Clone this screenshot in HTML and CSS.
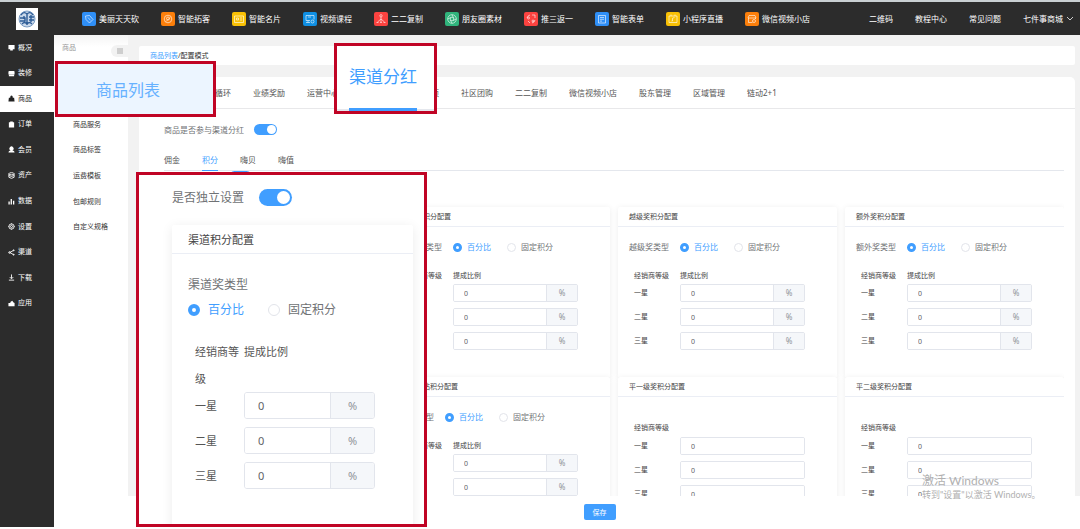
FILE: index.html
```html
<!DOCTYPE html>
<html lang="zh-CN">
<head>
    <meta charset="UTF-8">
    <meta name="viewport" content="width=device-width, initial-scale=1.0">
    <title>商品列表 - 配置模式</title>
    <link rel="stylesheet" href="styles.css">
</head>
<body>

  <!-- Top bar -->
  <header class="topbar">
    <div class="logo">
      <svg viewBox="0 0 22 22"><circle cx="11" cy="11" r="8" fill="#c9d8ea"/><g fill="none" stroke="#2d5c96" stroke-width="1.4"><path d="M5 7c2-3 4-3 6-1 2-2 4-2 6 1M4 10h5v3H4M13 9h5M13 12h5M11 6v11M6 16c2-2 3-2 5 0 2-2 3-2 5 0M8 8v3M15 7v7"/></g><circle cx="11" cy="11" r="8" fill="none" stroke="#5f88b8" stroke-width=".8"/></svg>
    </div>
    <nav class="apps">
      <a href="#"><svg class="blue" viewBox="0 0 14 14"><path d="M3.500 4l4-.5 3.500 4L7.500 11 4 7.500zM6 5.500l2.500 2.800"/></svg>美丽天天砍</a>
      <a href="#"><svg class="orange" viewBox="0 0 14 14"><circle cx="7" cy="7" r="3.800"/><circle cx="7" cy="6.500" r="1.500"/><path d="M5 9.500l4-4"/></svg>智能拓客</a>
      <a href="#"><svg class="yellow" viewBox="0 0 14 14"><path d="M2.500 4h9v6.500h-9zM4.500 6h2v2h-2zM8 6h2M8 8h2"/></svg>智能名片</a>
      <a href="#"><svg class="sky" viewBox="0 0 14 14"><path d="M3 3.500h8v4M3 3.500v5h4M5 5h3M3 10.500h4M5 8.500v2"/><circle cx="9.500" cy="9.500" r="1.500"/></svg>视频课程</a>
      <a href="#"><svg class="red" viewBox="0 0 14 14"><circle cx="7" cy="3.800" r="1.200"/><path d="M7 5v5M7 7l-3.500 3M7 7l3.500 3M2.500 10.500h2M6 10.500h2M9.500 10.500h2"/></svg>二二复制</a>
      <a href="#"><svg class="green" viewBox="0 0 14 14"><circle cx="7" cy="7" r="4.300"/><circle cx="7" cy="7" r="1.800"/><path d="M7 2.700l1.600 3.500M11.300 7L8 8.500M7 11.300L5.400 8M2.700 7L6 5.500"/></svg>朋友圈素材</a>
      <a href="#"><svg class="red" viewBox="0 0 14 14"><path d="M3 6a4 4 0 0 1 3-3M8 3h3v3M11 8a4 4 0 0 1-3 3M6 11l-2-2"/><circle cx="4.500" cy="6" r="1"/><circle cx="9" cy="9" r="1"/></svg>推三返一</a>
      <a href="#"><svg class="blue" viewBox="0 0 14 14"><path d="M3.500 3.500h7v7.500h-7zM5 5.500h4M5 7.300h4M5 9.100h2"/></svg>智能表单</a>
      <a href="#"><svg class="yellow" viewBox="0 0 14 14"><path d="M3 4h8v6.500H3zM5 2.500V4M9 2.500V4M6.500 9V6.200l2-.7M5.500 9h1"/></svg>小程序直播</a>
      <a href="#"><svg class="orange" viewBox="0 0 14 14"><path d="M4 3.500h6l1 2.500H3zM3.500 6v4.500h4M10.500 6v1"/><circle cx="9" cy="9" r="1.500"/></svg>微信视频小店</a>
    </nav>
    <nav class="links">
      <a href="#">二维码</a>
      <a href="#">教程中心</a>
      <a href="#">常见问题</a>
      <a href="#">七件事商城<svg class="chevron" viewBox="0 0 8 8"><path d="M1 2l3 3 3-3"/></svg></a>
    </nav>
  </header>

  <div class="layout">
    <!-- Sidebar -->
    <nav class="sidebar">
      <a href="#"><svg viewBox="0 0 8 8"><path d="M.5 1h7v5h-7zM2.500 6h3v1.500h-3z"/></svg>概况</a>
      <a href="#"><svg viewBox="0 0 8 8"><path d="M.5 2q0-1 1-1h5q1 0 1 1v3H.500zM1 5.500h6V7H1z"/></svg>装修</a>
      <a href="#" class="active"><svg viewBox="0 0 8 8"><path d="M1 3h6l.5 4.500h-7zM2.500 3a1.500 2.500 0 0 1 3 0z"/></svg>商品</a>
      <a href="#"><svg viewBox="0 0 8 8"><path d="M1 1.500h1.500V.5h3v1H7v6H1z"/></svg>订单</a>
      <a href="#"><svg viewBox="0 0 8 8"><path d="M.5 7.500q0-2.500 2.500-2.500a2.300 2.300 0 1 1 2 0q2.500 0 2.500 2.500z"/></svg>会员</a>
      <a href="#"><svg class="line" viewBox="0 0 8 8"><ellipse cx="4" cy="2" rx="3" ry="1.200"/><path d="M1 2v4q3 2.500 6 0V2M1 4q3 2 6 0"/></svg>资产</a>
      <a href="#"><svg viewBox="0 0 8 8"><path d="M.5 4H2v3.500H.5zM3 1h1.500v6.500H3zM5.700 3h1.500v4.500H5.700z"/></svg>数据</a>
      <a href="#"><svg class="line" viewBox="0 0 8 8"><circle cx="4" cy="4" r="3"/><circle cx="4" cy="4" r="1.200"/><path d="M4 .5v1M4 6.500v1M.5 4h1M6.500 4h1"/></svg>设置</a>
      <a href="#"><svg class="line" viewBox="0 0 8 8"><path d="M6.500 1.500L2 4l4.500 2.500"/><circle cx="6.500" cy="1.500" r=".6"/><circle cx="1.700" cy="4" r=".9"/><circle cx="6.500" cy="6.500" r=".6"/></svg>渠道</a>
      <a href="#"><svg class="line" viewBox="0 0 8 8"><path d="M4 .5v4.500M2 3.500l2 2 2-2M1 7h6"/></svg>下载</a>
      <a href="#"><svg viewBox="0 0 8 8"><path d="M.5 3.500h2L3 2l2-1.200L6 2.500l1.500 1v3.500h-7z"/></svg>应用</a>
    </nav>

    <div class="content">
      <div class="work">
        <!-- Second level menu -->
        <nav class="submenu">
          <div class="submenu-title">商品<span class="fold"><svg viewBox="0 0 6 6"><path d="M0 1h6M0 3h6M0 5h6"/></svg></span></div>
          <div class="submenu-list">
            <a href="#">商品服务</a>
            <a href="#">商品标签</a>
            <a href="#">运费模板</a>
            <a href="#">包邮规则</a>
            <a href="#">自定义规格</a>
          </div>
        </nav>

        <main class="main">
          <div class="breadcrumb"><a href="#">商品列表</a>/配置模式</div>

          <div class="panel">
            <div class="tabs">
              <a href="#">消费循环</a>
              <a href="#">业绩奖励</a>
              <a href="#">运营中心</a>
              <a href="#">渠道分红</a>
              <a href="#">奖励项</a>
              <a href="#">社区团购</a>
              <a href="#">二二复制</a>
              <a href="#">微信视频小店</a>
              <a href="#">股东管理</a>
              <a href="#">区域管理</a>
              <a href="#">链动2+1</a>
            </div>

            <div class="panel-body">
              <div class="join">
                <label for="join">商品是否参与渠道分红</label>
                <input type="checkbox" class="switch" id="join" checked>
              </div>
              <div class="subtabs">
                <a href="#">佣金</a>
                <a href="#" class="active">积分</a>
                <a href="#">嗨贝</a>
                <a href="#">嗨值</a>
              </div>
              <div class="alone"><input type="checkbox" class="switch" aria-label="是否独立设置" checked></div>

              <div class="cards">
                <section class="card second">
                  <h3>平级奖积分配置</h3>
                  <div class="type">
                    <span>平级奖类型</span>
                    <label><input type="radio" name="t1" checked>百分比</label>
                    <label><input type="radio" name="t1">固定积分</label>
                  </div>
                  <div class="levels">
                    <div class="row head"><span>经销商等级</span><span>提成比例</span></div>
                    <div class="row"><label for="a1">一星</label><div class="field"><input type="text" id="a1" value="0"><span>%</span></div></div>
                    <div class="row"><label for="a2">二星</label><div class="field"><input type="text" id="a2" value="0"><span>%</span></div></div>
                    <div class="row"><label for="a3">三星</label><div class="field"><input type="text" id="a3" value="0"><span>%</span></div></div>
                  </div>
                </section>

                <section class="card">
                  <h3>越级奖积分配置</h3>
                  <div class="type">
                    <span>越级奖类型</span>
                    <label><input type="radio" name="t2" checked>百分比</label>
                    <label><input type="radio" name="t2">固定积分</label>
                  </div>
                  <div class="levels">
                    <div class="row head"><span>经销商等级</span><span>提成比例</span></div>
                    <div class="row"><label for="b1">一星</label><div class="field"><input type="text" id="b1" value="0"><span>%</span></div></div>
                    <div class="row"><label for="b2">二星</label><div class="field"><input type="text" id="b2" value="0"><span>%</span></div></div>
                    <div class="row"><label for="b3">三星</label><div class="field"><input type="text" id="b3" value="0"><span>%</span></div></div>
                  </div>
                </section>

                <section class="card">
                  <h3>额外奖积分配置</h3>
                  <div class="type">
                    <span>额外奖类型</span>
                    <label><input type="radio" name="t3" checked>百分比</label>
                    <label><input type="radio" name="t3">固定积分</label>
                  </div>
                  <div class="levels">
                    <div class="row head"><span>经销商等级</span><span>提成比例</span></div>
                    <div class="row"><label for="c1">一星</label><div class="field"><input type="text" id="c1" value="0"><span>%</span></div></div>
                    <div class="row"><label for="c2">二星</label><div class="field"><input type="text" id="c2" value="0"><span>%</span></div></div>
                    <div class="row"><label for="c3">三星</label><div class="field"><input type="text" id="c3" value="0"><span>%</span></div></div>
                  </div>
                </section>

                <section class="card second">
                  <h3>区服务站积分配置</h3>
                  <div class="type">
                    <span>奖励类型</span>
                    <label><input type="radio" name="t4" checked>百分比</label>
                    <label><input type="radio" name="t4">固定积分</label>
                  </div>
                  <div class="levels">
                    <div class="row head"><span>经销商等级</span><span>提成比例</span></div>
                    <div class="row"><label for="d1">一星</label><div class="field"><input type="text" id="d1" value="0"><span>%</span></div></div>
                    <div class="row"><label for="d2">二星</label><div class="field"><input type="text" id="d2" value="0"><span>%</span></div></div>
                  </div>
                </section>

                <section class="card plain">
                  <h3>平一级奖积分配置</h3>
                  <div class="levels">
                    <div class="row head"><span>经销商等级</span></div>
                    <div class="row"><label for="e1">一星</label><div class="field"><input type="text" id="e1" value="0"></div></div>
                    <div class="row"><label for="e2">二星</label><div class="field"><input type="text" id="e2" value="0"></div></div>
                    <div class="row"><label for="e3">三星</label><div class="field"><input type="text" id="e3" value="0"></div></div>
                  </div>
                </section>

                <section class="card plain">
                  <h3>平二级奖积分配置</h3>
                  <div class="levels">
                    <div class="row head"><span>经销商等级</span></div>
                    <div class="row"><label for="f1">一星</label><div class="field"><input type="text" id="f1" value="0"></div></div>
                    <div class="row"><label for="f2">二星</label><div class="field"><input type="text" id="f2" value="0"></div></div>
                    <div class="row"><label for="f3">三星</label><div class="field"><input type="text" id="f3" value="0"></div></div>
                  </div>
                </section>
              </div>
            </div>
          </div>
        </main>
      </div>

      <footer class="footer"><button type="button">保存</button></footer>
    </div>
  </div>

  <!-- Enlarged callouts over the page -->
  <div class="callout callout-menu">商品列表</div>

  <div class="callout callout-tab"><span>渠道分红</span></div>

  <div class="callout callout-form">
    <div class="join">
      <label for="big">是否独立设置</label>
      <input type="checkbox" class="switch" id="big" checked>
    </div>
    <section class="card">
      <h3>渠道积分配置</h3>
      <div class="type">
        <span>渠道奖类型</span>
        <label><input type="radio" name="t0" checked>百分比</label>
        <label><input type="radio" name="t0">固定积分</label>
      </div>
      <div class="levels">
        <div class="row head"><span>经销商等级</span><span>提成比例</span></div>
        <div class="row"><label for="g1">一星</label><div class="field"><input type="text" id="g1" value="0"><span>%</span></div></div>
        <div class="row"><label for="g2">二星</label><div class="field"><input type="text" id="g2" value="0"><span>%</span></div></div>
        <div class="row"><label for="g3">三星</label><div class="field"><input type="text" id="g3" value="0"><span>%</span></div></div>
      </div>
    </section>
  </div>

  <div class="watermark">
    <p class="big">激活 Windows</p>
    <p>转到"设置"以激活 Windows。</p>
  </div>

</body>
</html>
```
FILE: styles.css
```css
* {
    box-sizing: border-box;
}
body {
    position: relative;
    display: flex;
    flex-direction: column;
    height: 100vh;
    margin: 0;
    padding-bottom: 2px;
    overflow: hidden;
    background: #fff;
    color: #555;
    font-family: "Noto Sans", "Noto Sans CJK SC", sans-serif;
    font-size: 8px;
    line-height: 12px;
}
a {
    color: inherit;
    text-decoration: none;
    white-space: nowrap;
}
h3, p {
    margin: 0;
    font-weight: normal;
}
input {
    margin: 0;
    font-family: inherit;
}

/* top bar */
.topbar {
    display: flex;
    align-items: center;
    flex: none;
    height: 35px;
    padding: 0 6px 0 16px;
    border-top: 2px solid #c9cfd2;
    background: #2c2c2c;
    color: #fff;
}
.logo {
    width: 22px;
    height: 22px;
    background: #fff;
}
.logo svg {
    display: block;
}
.apps, .links {
    display: flex;
    gap: 22px;
}
.apps {
    margin-left: 44px;
}
.links {
    margin-left: auto;
}
.apps a, .links a {
    display: flex;
    align-items: center;
    gap: 3px;
}
.apps svg {
    width: 14px;
    height: 14px;
    border-radius: 2px;
    fill: none;
    stroke: #fff;
    stroke-opacity: .75;
    stroke-width: .8;
}
.blue { background: #2f8ff7; }
.orange { background: #fb7f0b; }
.yellow { background: #f8c005; }
.sky { background: #0f8fe3; }
.red { background: #fb4340; }
.green { background: #30b47c; }
.chevron {
    width: 8px;
    height: 8px;
    fill: none;
    stroke: #ccc;
}

/* left menus */
.layout {
    display: flex;
    flex: 1;
    min-height: 0;
}
.sidebar {
    display: grid;
    grid-auto-rows: 1fr;
    align-self: stretch;
    flex: none;
    width: 54px;
    padding-bottom: 211px;
    background: #2c2c2c;
    color: #fff;
    font-size: 7px;
}
.sidebar a {
    display: flex;
    align-items: center;
    gap: 3px;
    padding-left: 8px;
}
.sidebar svg {
    width: 7px;
    height: 7px;
    fill: currentColor;
}
.sidebar .line {
    fill: none;
    stroke: currentColor;
}
.sidebar .active {
    background: #fff;
    color: #222;
}
.content {
    display: flex;
    flex-direction: column;
    flex: 1;
    min-width: 0;
}
.work {
    display: flex;
    flex: 1;
    min-height: 0;
    overflow: hidden;
    background: #f2f2f2;
}
.submenu {
    flex: none;
    width: 74px;
    background: linear-gradient(#f4f4f4, #fff 12px);
    color: #333;
    font-size: 7px;
}
.submenu-title {
    display: flex;
    align-items: center;
    justify-content: space-between;
    height: 26px;
    padding-left: 8px;
    color: #999;
}
.fold {
    display: flex;
    align-items: center;
    justify-content: center;
    align-self: flex-end;
    width: 17px;
    height: 12px;
    margin-bottom: 4px;
    border-radius: 6px 0 0 6px;
    background: #f2f2f2;
}
.fold svg {
    width: 6px;
    height: 6px;
    stroke: #aaa;
}
.submenu-list {
    display: grid;
    grid-auto-rows: 1fr;
    height: 128px;
    margin-top: 51px;
    padding-left: 19px;
}
.submenu-list a {
    display: flex;
    align-items: center;
}

/* main area */
.main {
    display: flex;
    flex-direction: column;
    flex: 1;
    min-width: 0;
    gap: 12px;
    padding: 11px 5px 0 11px;
}
.breadcrumb {
    flex: none;
    height: 19px;
    padding-left: 11px;
    border-radius: 2px;
    background: #fff;
    color: #333;
    font-size: 7px;
    line-height: 19px;
}
.breadcrumb a {
    color: #409eff;
}
.panel {
    flex: 1;
    min-height: 0;
    overflow: hidden;
    border-radius: 5px 5px 0 0;
    background: #fff;
}
.tabs {
    display: flex;
    gap: 22px;
    height: 32px;
    padding-left: 60px;
    border-bottom: 1px solid #e8e8ea;
    line-height: 31px;
}
.panel-body {
    padding: 0 11px 0 25px;
}
.join {
    display: flex;
    align-items: center;
    gap: 10px;
    height: 41px;
    color: #707275;
}
.switch {
    appearance: none;
    display: flex;
    align-items: center;
    justify-content: flex-end;
    width: 23px;
    height: 11px;
    padding: 1px;
    border-radius: 6px;
    background: #409eff;
}
.switch::before {
    content: "";
    height: 100%;
    aspect-ratio: 1;
    border-radius: 50%;
    background: #fff;
}
.subtabs {
    display: flex;
    gap: 22px;
    height: 21px;
    border-bottom: 1px solid #e4e7ed;
    line-height: 20px;
}
.subtabs a {
    height: 21px;
}
.subtabs .active {
    border-bottom: 1px solid #409eff;
    color: #409eff;
}
.alone {
    height: 29px;
    padding-left: 65px;
}

/* reward cards */
.cards {
    display: grid;
    grid-template-columns: repeat(4, 1fr);
    grid-auto-rows: 170px;
    column-gap: 8px;
    padding-top: 7px;
    overflow: hidden;
}
.second {
    grid-column-start: 2;
}
.card {
    border-radius: 2px 2px 0 0;
    background: #fff;
    box-shadow: 0 1px 6px rgba(0, 0, 0, .08);
}
.card h3 {
    height: 20px;
    padding-left: 11px;
    border-bottom: 1px solid #ebeef5;
    color: #444;
    font-size: 7px;
    line-height: 19px;
}
.type {
    display: flex;
    align-items: center;
    height: 40px;
    padding-left: 11px;
    color: #707275;
}
.type label {
    display: flex;
    align-items: center;
    gap: 5px;
    margin-left: 11px;
}
.type label + label {
    margin-left: 16px;
}
.type label:has(:checked) {
    color: #409eff;
}
.type input {
    appearance: none;
    width: 9px;
    height: 9px;
    border: 1px solid #e2e4ea;
    border-radius: 50%;
    background: #fff;
}
.type input:checked {
    border: 3px solid #409eff;
}
.levels {
    display: grid;
    gap: 6px;
    padding-left: 16px;
    color: #444;
    font-size: 7px;
}
.row {
    display: grid;
    grid-template-columns: 46px 125px;
    align-items: center;
}
.head {
    height: 11px;
    margin: 3px 0 -3px;
}
.plain .levels {
    padding-top: 22px;
}
.plain .head {
    margin-bottom: -2px;
}
.field {
    display: flex;
    height: 18px;
    border: 1px solid #e2e5ec;
    border-radius: 2px;
    overflow: hidden;
}
.field input {
    flex: 1;
    min-width: 0;
    padding: 0 10px;
    border: 0;
    color: #606266;
    font-size: 7px;
}
.field span {
    display: flex;
    align-items: center;
    justify-content: center;
    width: 31px;
    border-left: 1px solid #e2e5ec;
    background: #f5f7fa;
    color: #909399;
    font-size: 8px;
}

.footer {
    display: flex;
    justify-content: center;
    flex: none;
    height: 31px;
    padding: 8px 0 7px 65px;
    background: #fff;
}
.footer button {
    width: 32px;
    padding: 0;
    border: 0;
    border-radius: 2px;
    background: #409eff;
    color: #fff;
    font-family: inherit;
    font-size: 7px;
}

/* callouts */
.callout {
    position: absolute;
    border: 3px solid #c00425;
    background: #fff;
}
.callout-menu {
    top: 61px;
    left: 55px;
    width: 161px;
    height: 56px;
    padding-left: 38px;
    background: #ecf5ff;
    color: #66b1ff;
    font-size: 16px;
    line-height: 52px;
}
.callout-tab {
    top: 43px;
    left: 334px;
    height: 71px;
    padding: 0 17px 0 12px;
    background: linear-gradient(#fff 63px, #e4e7ed 63px);
    color: #409eff;
    font-size: 17px;
    line-height: 61px;
}
.callout-tab span {
    display: block;
    height: 65px;
    border-bottom: 3px solid #409eff;
}
.callout-form {
    top: 172px;
    left: 136px;
    width: 291px;
    height: 355px;
    padding: 0 11px 0 33px;
    overflow: hidden;
    font-size: 12px;
    line-height: 27px;
}
.callout-form .join {
    gap: 15px;
    height: 44px;
}
.callout-form .switch {
    width: 33px;
    height: 17px;
    padding: 2px;
    border-radius: 9px;
}
.callout-form .card {
    height: 320px;
    margin-top: 6px;
    box-shadow: 0 2px 12px rgba(0, 0, 0, .08);
}
.callout-form h3 {
    height: 29px;
    padding-left: 16px;
    font-size: 11px;
    line-height: 29px;
}
.callout-form .type {
    flex-wrap: wrap;
    height: auto;
    padding: 18px 16px 16px;
    line-height: 25px;
}
.callout-form .type span {
    width: 100%;
}
.callout-form .type label {
    gap: 8px;
    margin-left: 0;
}
.callout-form .type label + label {
    margin-left: 24px;
}
.callout-form .type input {
    width: 12px;
    height: 12px;
}
.callout-form .type input:checked {
    border-width: 4px;
}
.callout-form .levels {
    gap: 8px;
    padding-left: 23px;
    color: #555;
    font-size: 11px;
}
.callout-form .row {
    grid-template-columns: 49px 131px;
}
.callout-form .head {
    align-items: start;
    height: 54px;
    margin: 0 0 -8px;
}
.callout-form .head span:first-child {
    width: 45px;
}
.callout-form .field {
    height: 27px;
    border-radius: 3px;
}
.callout-form .field input {
    padding: 0 13px;
    font-size: 11px;
}
.callout-form .field span {
    width: 44px;
    font-size: 11px;
}

.watermark {
    position: absolute;
    right: 48px;
    bottom: 28px;
    width: 110px;
    color: #b0b0b0;
    font-family: Lato, "Noto Sans CJK SC", sans-serif;
    font-size: 9px;
    white-space: nowrap;
}
.watermark .big {
    font-size: 12px;
    line-height: 16px;
}
```
